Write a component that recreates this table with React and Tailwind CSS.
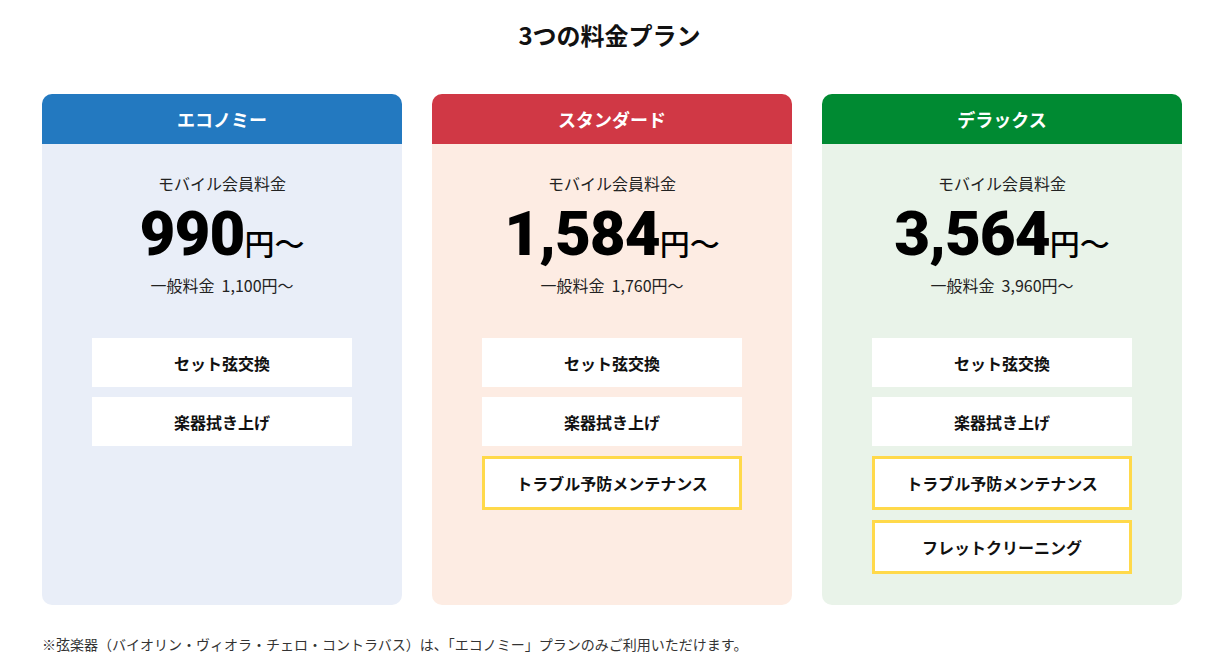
import React from 'react';

const plans = [
  {
    name: 'エコノミー',
    head: 'bg-[#2379c0]',
    body: 'bg-[#e9eef8]',
    price: '990',
    normal: '1,100',
    items: [
      { label: 'セット弦交換' },
      { label: '楽器拭き上げ' },
    ],
  },
  {
    name: 'スタンダード',
    head: 'bg-[#d03845]',
    body: 'bg-[#fdece3]',
    price: '1,584',
    normal: '1,760',
    items: [
      { label: 'セット弦交換' },
      { label: '楽器拭き上げ' },
      { label: 'トラブル予防メンテナンス', extra: true },
    ],
  },
  {
    name: 'デラックス',
    head: 'bg-[#008a32]',
    body: 'bg-[#e9f3e9]',
    price: '3,564',
    normal: '3,960',
    items: [
      { label: 'セット弦交換' },
      { label: '楽器拭き上げ' },
      { label: 'トラブル予防メンテナンス', extra: true },
      { label: 'フレットクリーニング', extra: true },
    ],
  },
];

function PlanCard({ plan }) {
  return (
    <div className={`w-[360px] h-[511px] rounded-[10px] overflow-hidden flex flex-col ${plan.body}`}>
      <div className={`h-[50px] flex items-center justify-center text-white text-[18px] font-bold ${plan.head}`}>
        {plan.name}
      </div>
      <div className="flex flex-col items-center pt-[27px]">
        <p className="text-[16px] leading-[24px] text-[#222]">モバイル会員料金</p>
        <p className="flex items-baseline mt-[9px] leading-[60px] text-black">
          <span className="font-['Roboto',sans-serif] font-black text-[62px] tracking-[-1px]">{plan.price}</span>
          <span className="text-[30px] font-medium">円〜</span>
        </p>
        <p className="mt-[1px] text-[16px] leading-[24px] text-[#222]">一般料金&nbsp;&nbsp;{plan.normal}円〜</p>
        <div className="mt-[41px] flex flex-col gap-[10px]">
          {plan.items.map((it) =>
            it.extra ? (
              <div
                key={it.label}
                className="w-[260px] h-[54px] bg-white border-[3px] border-[#ffd94a] flex items-center justify-center text-[16px] font-bold text-[#111]"
              >
                {it.label}
              </div>
            ) : (
              <div
                key={it.label}
                className="w-[260px] h-[49px] bg-white flex items-center justify-center text-[16px] font-bold text-[#111]"
              >
                {it.label}
              </div>
            )
          )}
        </div>
      </div>
    </div>
  );
}

export default function App() {
  return (
    <div className="w-[1219px] h-[672px] bg-white font-['Noto_Sans_CJK_JP','Noto_Sans',sans-serif] text-[#111]">
      <h2 className="pt-[17px] text-center text-[24px] leading-[36px] font-bold">3つの料金プラン</h2>
      <div className="mt-[41px] flex gap-[30px] pl-[42px]">
        {plans.map((p) => (
          <PlanCard key={p.name} plan={p} />
        ))}
      </div>
      <p className="mt-[28px] pl-[42px] text-[14px] leading-[22px] text-[#333]">
        ※弦楽器（バイオリン・ヴィオラ・チェロ・コントラバス）は、「エコノミー」プランのみご利用いただけます。
      </p>
    </div>
  );
}
